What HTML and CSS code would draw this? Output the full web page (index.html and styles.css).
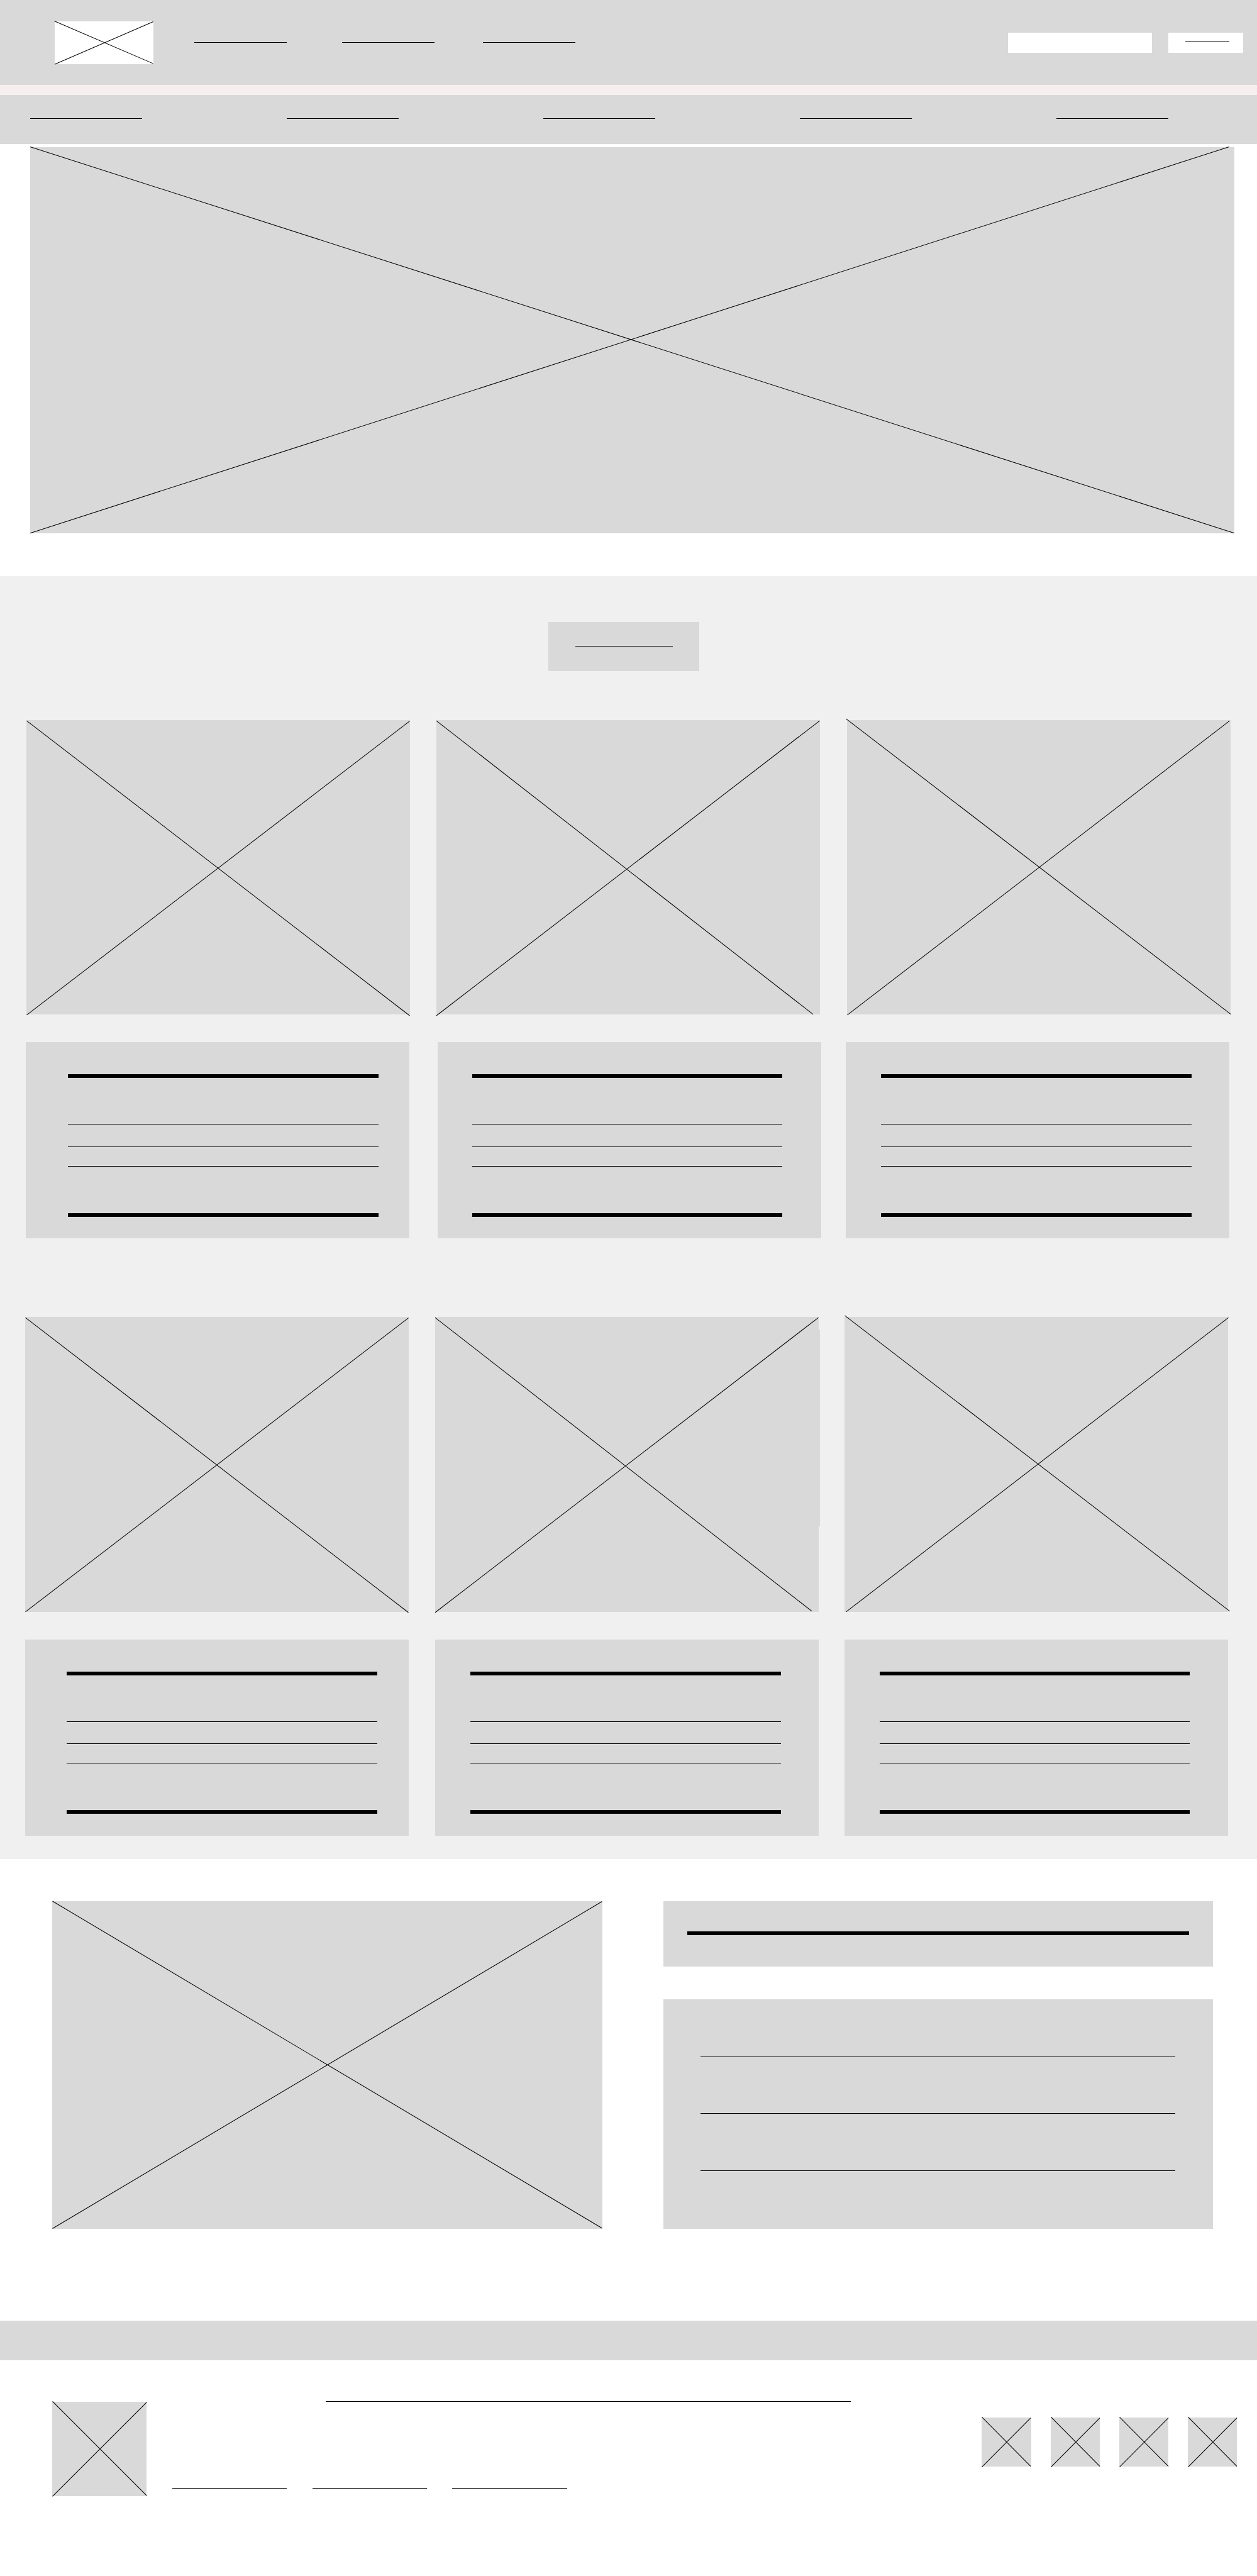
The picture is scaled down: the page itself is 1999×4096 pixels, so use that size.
FILE: index.html
```html
<!DOCTYPE html>
<html lang="en">
<head>
<meta charset="utf-8">
<title>Wireframe</title>
<link rel="stylesheet" href="styles.css">
</head>
<body>
<header class="topbar">
  <div class="logo"><svg class="cross" viewBox="0 0 301 130" preserveAspectRatio="none"><path d="M-1-1L301 129M0 131L301 1"/></svg></div>
  <nav class="topbar-links">
    <span class="rule"></span><span class="rule"></span><span class="rule"></span>
  </nav>
  <div class="search"></div>
  <div class="login"><span class="rule"></span></div>
</header>
<div class="divider"></div>
<nav class="menu">
  <span class="rule"></span><span class="rule"></span><span class="rule"></span><span class="rule"></span><span class="rule"></span>
</nav>
<section class="hero"><svg class="cross" viewBox="0 0 3680 1180" preserveAspectRatio="none"><path d="M0-1L3679 1179M0 1179L3663-1"/></svg></section>

<main class="catalog">
  <div class="catalog-title"><span class="rule"></span></div>

  <div class="photos photos-first">
    <div class="photo"><svg class="cross" viewBox="0 0 1172 900" preserveAspectRatio="none"><path d="M1 2L1171 903M1 901L1171 3"/></svg></div>
    <div class="photo"><svg class="cross" viewBox="0 0 1172 900" preserveAspectRatio="none"><path d="M0 2L1151 899M0 903L1171 2"/></svg></div>
    <div class="photo"><svg class="cross" viewBox="0 0 1172 900" preserveAspectRatio="none"><path d="M-3-4L1173 899M1 901L1169 2"/></svg></div>
  </div>
  <div class="texts texts-first">
    <div class="text"><span class="bar"></span><span class="rule"></span><span class="rule"></span><span class="rule"></span><span class="bar"></span></div>
    <div class="text"><span class="bar"></span><span class="rule"></span><span class="rule"></span><span class="rule"></span><span class="bar"></span></div>
    <div class="text"><span class="bar"></span><span class="rule"></span><span class="rule"></span><span class="rule"></span><span class="bar"></span></div>
  </div>

  <div class="photos photos-second">
    <div class="photo"><svg class="cross" viewBox="0 0 1172 900" preserveAspectRatio="none"><path d="M1 2L1171 903M1 901L1171 3"/></svg></div>
    <div class="photo"><svg class="cross" viewBox="0 0 1172 900" preserveAspectRatio="none"><rect x="1170" y="40" width="6" height="600"/><path d="M0 2L1151 899M0 903L1171 2"/></svg></div>
    <div class="photo"><svg class="cross" viewBox="0 0 1172 900" preserveAspectRatio="none"><path d="M1-4L1177 899M5 901L1173 2"/></svg></div>
  </div>
  <div class="texts texts-second">
    <div class="text"><span class="bar"></span><span class="rule"></span><span class="rule"></span><span class="rule"></span><span class="bar"></span></div>
    <div class="text"><span class="bar"></span><span class="rule"></span><span class="rule"></span><span class="rule"></span><span class="bar"></span></div>
    <div class="text"><span class="bar"></span><span class="rule"></span><span class="rule"></span><span class="rule"></span><span class="bar"></span></div>
  </div>
</main>

<section class="about">
  <div class="about-photo"><svg class="cross" viewBox="0 0 1680 1000" preserveAspectRatio="none"><path d="M1 0L1680 999M1 1000L1680 1"/></svg></div>
  <div class="about-side">
    <div class="about-title"><span class="bar"></span></div>
    <div class="about-text"><span class="rule"></span><span class="rule"></span><span class="rule"></span></div>
  </div>
</section>

<div class="band"></div>

<footer class="footer">
  <div class="footer-logo"><svg class="cross" viewBox="0 0 288 288" preserveAspectRatio="none"><path d="M1-1L289 287M1 289L289 1"/></svg></div>
  <div class="footer-info">
    <span class="rule footer-note"></span>
    <div class="footer-links"><span class="rule"></span><span class="rule"></span><span class="rule"></span></div>
  </div>
  <div class="socials">
    <div class="social"><svg class="cross" viewBox="0 0 150 150" preserveAspectRatio="none"><path d="M1-1L150 149M1 151L150 1"/></svg></div>
    <div class="social"><svg class="cross" viewBox="0 0 150 150" preserveAspectRatio="none"><path d="M1-1L150 149M1 151L150 1"/></svg></div>
    <div class="social"><svg class="cross" viewBox="0 0 150 150" preserveAspectRatio="none"><path d="M1-1L150 149M1 151L150 1"/></svg></div>
    <div class="social"><svg class="cross" viewBox="0 0 150 150" preserveAspectRatio="none"><path d="M1-1L150 149M1 151L150 1"/></svg></div>
  </div>
</footer>
</body>
</html>
```
FILE: styles.css
```css
:root {
  /* one design unit */
  --u: 0.5205px;
  --box: #d9d9d9;
}

* { box-sizing: border-box; }

html, body { margin: 0; background: #fff; }

body {
  height: 4096px;
  overflow: hidden;
  font-family: "Liberation Sans", sans-serif;
}

.rule { display: block; height: 1px; background: #000; flex: none; }
.bar { display: block; height: calc(12 * var(--u)); background: #000; flex: none; }

.cross { display: block; width: 100%; height: 100%; overflow: visible; }
.cross path { fill: none; stroke: #000; stroke-width: 2; }
.cross rect { fill: var(--box); }

/* header */
.topbar {
  display: flex;
  align-items: flex-start;
  height: calc(260 * var(--u));
  padding-left: calc(167 * var(--u));
  background: var(--box);
}
.logo {
  flex: none;
  width: calc(301 * var(--u));
  height: calc(130 * var(--u));
  margin-top: calc(66 * var(--u));
  background: #fff;
}
.topbar-links {
  display: flex;
  flex: none;
  width: calc(1164 * var(--u));
  margin: calc(128 * var(--u)) 0 0 calc(126 * var(--u));
}
.topbar-links .rule { width: calc(282 * var(--u)); margin-right: calc(170 * var(--u)); }
.topbar-links .rule:nth-child(2) { margin-right: calc(148 * var(--u)); }
.topbar-links .rule:last-child { margin-right: 0; }
.search {
  flex: none;
  width: calc(440 * var(--u));
  height: calc(62 * var(--u));
  margin: calc(100 * var(--u)) calc(50 * var(--u)) 0 calc(1322 * var(--u));
  background: #fff;
}
.login {
  flex: none;
  width: calc(228 * var(--u));
  height: calc(62 * var(--u));
  margin-top: calc(100 * var(--u));
  padding: calc(26 * var(--u)) 0 0 calc(52 * var(--u));
  background: #fff;
}
.login .rule { width: calc(134 * var(--u)); }

.divider { height: calc(30 * var(--u)); background: #f5f0ef; }

.menu {
  display: flex;
  gap: calc(442 * var(--u));
  height: calc(150 * var(--u));
  padding: calc(72 * var(--u)) 0 0 calc(92 * var(--u));
  background: var(--box);
}
.menu .rule { width: calc(342 * var(--u)); }

.hero {
  width: calc(3680 * var(--u));
  height: calc(1180 * var(--u));
  margin: calc(10 * var(--u)) 0 calc(130 * var(--u)) calc(92 * var(--u));
  background: var(--box);
}

/* catalog */
.catalog {
  height: calc(3920 * var(--u));
  padding-top: calc(140 * var(--u));
  background: #f0f0f0;
}
.catalog-title {
  width: calc(460 * var(--u));
  height: calc(150 * var(--u));
  margin-left: calc(1676 * var(--u));
  padding: calc(74 * var(--u)) 0 0 calc(82 * var(--u));
  background: var(--box);
}
.catalog-title .rule { width: calc(298 * var(--u)); }

.photos, .texts { display: flex; }
.photo {
  flex: none;
  width: calc(1172 * var(--u));
  height: calc(900 * var(--u));
  background: var(--box);
}
.text {
  flex: none;
  width: calc(1172 * var(--u));
  height: calc(600 * var(--u));
  padding: calc(98 * var(--u)) 0 0 calc(108 * var(--u));
  background: var(--box);
}
.text .bar, .text .rule { width: calc(948 * var(--u)); }
.text .rule { margin-bottom: calc(66 * var(--u)); }
.text .bar:first-child { margin-bottom: calc(140 * var(--u)); }
.text .rule:nth-child(3) { margin-bottom: calc(58 * var(--u)); }
.text .rule:nth-child(4) { margin-bottom: calc(142 * var(--u)); }

.photos-first { gap: calc(82 * var(--u)); margin: calc(150 * var(--u)) 0 0 calc(80 * var(--u)); }
.texts-first { margin: calc(84 * var(--u)) 0 0 calc(78 * var(--u)); }
.texts-first .text:nth-child(1) { margin-right: calc(88 * var(--u)); padding-left: calc(130 * var(--u)); }
.texts-first .text:nth-child(2) { margin-right: calc(74 * var(--u)); padding-left: calc(104 * var(--u)); }

.photos-second { margin: calc(240 * var(--u)) 0 0 calc(76 * var(--u)); }
.texts-second { margin: calc(84 * var(--u)) 0 0 calc(76 * var(--u)); }
.photos-second > :nth-child(1), .texts-second > :nth-child(1) { margin-right: calc(82 * var(--u)); }
.photos-second > :nth-child(2), .texts-second > :nth-child(2) { margin-right: calc(78 * var(--u)); }
.texts-second .text:first-child { padding-left: calc(128 * var(--u)); }

/* about */
.about {
  display: flex;
  gap: calc(186 * var(--u));
  height: calc(1410 * var(--u));
  padding: calc(128 * var(--u)) 0 0 calc(160 * var(--u));
}
.about-photo {
  flex: none;
  width: calc(1680 * var(--u));
  height: calc(1000 * var(--u));
  background: var(--box);
}
.about-side {
  display: flex;
  flex: none;
  flex-direction: column;
  gap: calc(100 * var(--u));
  width: calc(1680 * var(--u));
  height: calc(1000 * var(--u));
}
.about-title {
  height: calc(200 * var(--u));
  padding: calc(92 * var(--u)) 0 0 calc(74 * var(--u));
  background: var(--box);
}
.about-title .bar { width: calc(1534 * var(--u)); }
.about-text {
  display: flex;
  flex-direction: column;
  gap: calc(172 * var(--u));
  height: calc(700 * var(--u));
  padding: calc(174 * var(--u)) 0 0 calc(114 * var(--u));
  background: var(--box);
}
.about-text .rule { width: calc(1450 * var(--u)); }

.band { height: calc(120 * var(--u)); background: var(--box); }

/* footer */
.footer {
  display: flex;
  align-items: flex-start;
  padding: calc(126 * var(--u)) 0 0 calc(160 * var(--u));
}
.footer-logo {
  flex: none;
  width: calc(288 * var(--u));
  height: calc(288 * var(--u));
  margin-top: calc(2 * var(--u));
  background: var(--box);
}
.footer-info {
  flex: none;
  width: calc(2474 * var(--u));
  margin-left: calc(78 * var(--u));
}
.footer-note { width: calc(1603 * var(--u)); margin: 0 0 calc(262 * var(--u)) calc(470 * var(--u)); }
.footer-links { display: flex; gap: calc(77 * var(--u)); }
.footer-links .rule { width: calc(351 * var(--u)); }
.socials { display: flex; flex: none; gap: calc(60 * var(--u)); margin-top: calc(50 * var(--u)); }
.social {
  flex: none;
  width: calc(150 * var(--u));
  height: calc(150 * var(--u));
  background: var(--box);
}
```
